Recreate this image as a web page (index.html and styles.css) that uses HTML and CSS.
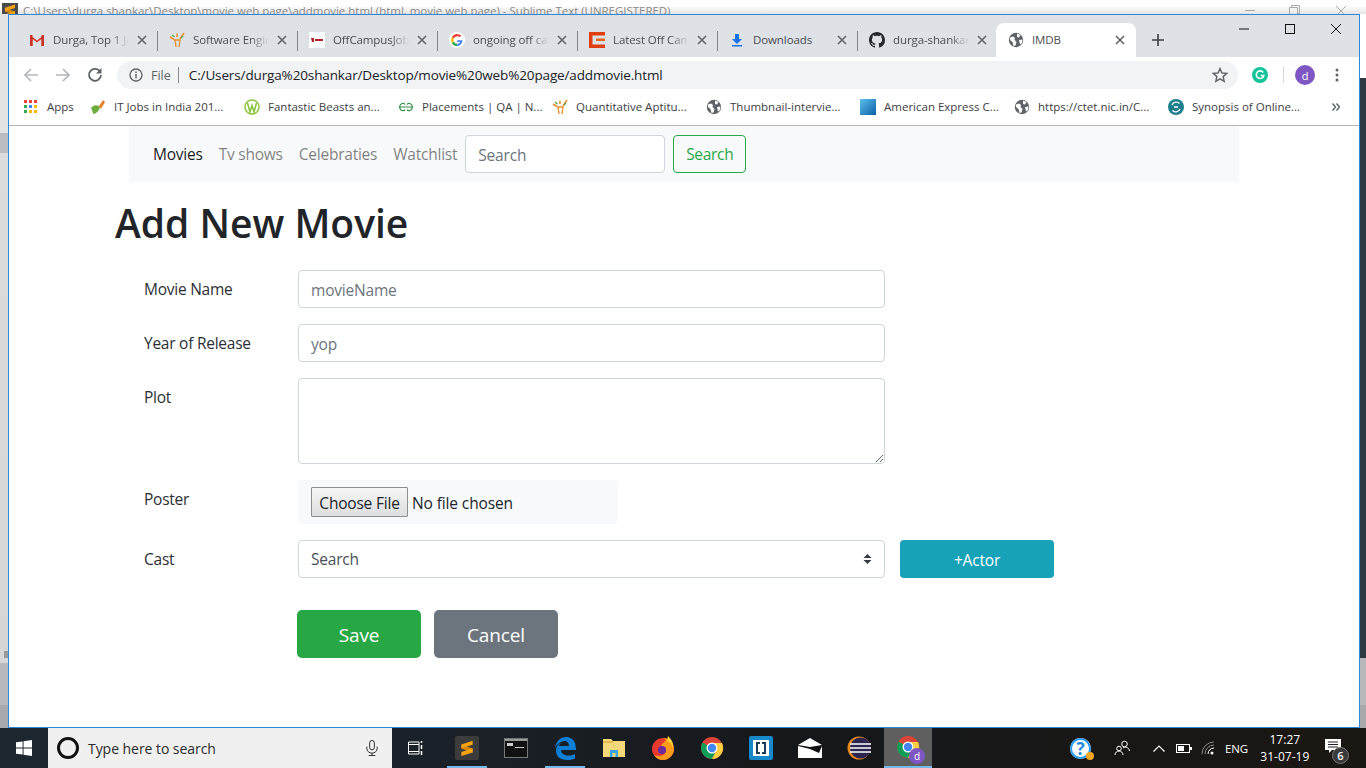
FILE: index.html
```html
<!DOCTYPE html>
<html lang="en">
<head>
<meta charset="utf-8">
<title>IMDB</title>
<link rel="stylesheet" href="styles.css">
</head>
<body>
<svg class="defs" width="0" height="0">
  <defs>
    <symbol id="globe" viewBox="0 0 16 16"><circle cx="8" cy="8" r="7.2" fill="#5f6368"/><path d="M2 5.5 5 4.5 7 6 6.5 8 8.500 10 7.500 13.500 5.500 14 4.500 10 2 8ZM9 1.500 12.500 3 11 5.500 9 5ZM11 8 14.500 7.500 14 11 12 12.500Z" fill="#fff"/></symbol>
    <symbol id="fig" viewBox="0 0 16 16"><path d="M1 5 5 7.500M15 1 11 7M8 1.500V5" stroke="#e8912d" stroke-width="1.600" fill="none"/><path d="M5 8H11L10 15M6 8 7 15" stroke="#e8912d" stroke-width="1.400" fill="none"/><path d="M3 3 5.500 5M12 6 14 4" stroke="#5aa848" stroke-width="1.400" fill="none"/></symbol>
    <symbol id="close" viewBox="0 0 10 10"><path d="M1 1 9 9M9 1 1 9" stroke="#5f6368" stroke-width="1.600"/></symbol>
    <symbol id="sublime" viewBox="0 0 16 16"><path d="M3 5 13 8.500V12L3 8.500Z" fill="#d98a0a"/><path d="M3 4.800 13 1.500V5L3 8.300Z" fill="#f7a30f"/><path d="M3 11.500 13 8.200V12L3 15Z" fill="#f7a30f"/></symbol>
  </defs>
</svg>
<div class="desktop">
  <div class="behind">
    <span class="sublime-small"><svg class="sublime-glyph"><use href="#sublime"/></svg></span>
    <span class="behind-title">C:\Users\durga shankar\Desktop\movie web page\addmovie.html (html, movie web page) - Sublime Text (UNREGISTERED)</span>
    <div class="behind-controls">
      <span class="bc-min"></span>
      <svg class="bc-max" viewBox="0 0 11 11"><path d="M.5 2.500H8.500V10.500H.5ZM2.500 2.500V.5H10.500V8.500H8.500" fill="none" stroke="#aaa"/></svg>
      <svg class="bc-x" viewBox="0 0 10 10"><path d="M0 0 10 10M10 0 0 10" stroke="#aaa"/></svg>
    </div>
  </div>
  <div class="middle">
    <div class="side side-left"><span class="side-blob"></span></div>
    <div class="window">
      <div class="tabstrip">
        <div class="tab">
          <svg class="favicon" viewBox="0 0 16 16"><path d="M1 14V3L8 8.500 15 3V14H12.500V7L8 10.500 3.500 7V14Z" fill="#d93a2f"/><path d="M1 3 3.500 3V14H1ZM12.500 3H15V14H12.500Z" fill="#c5352b"/></svg>
          <span class="tab-title">Durga, Top 1 Jobs for you</span>
          <svg class="tab-close"><use href="#close"/></svg>
        </div>
        <div class="tab">
          <svg class="favicon"><use href="#fig"/></svg>
          <span class="tab-title">Software Engineer</span>
          <svg class="tab-close"><use href="#close"/></svg>
        </div>
        <div class="tab">
          <svg class="favicon" viewBox="0 0 16 16"><rect width="16" height="16" fill="#fff"/><path d="M2 6H5V10H3ZM6 7H14V9H6Z" fill="#b3232a"/></svg>
          <span class="tab-title">OffCampusJobs4u</span>
          <svg class="tab-close"><use href="#close"/></svg>
        </div>
        <div class="tab">
          <svg class="favicon" viewBox="0 0 16 16"><circle cx="8" cy="8" r="8" fill="#fff"/><path d="M13.600 8.200H8.200V10H11.400A3.500 3.500 0 0 1 8.200 11.800V14.200A6 6 0 0 0 13.600 8.200Z" fill="#4285f4"/><path d="M8.200 11.800A3.800 3.800 0 0 1 4.700 9.500L2.800 11A6.200 6.200 0 0 0 8.200 14.200Z" fill="#34a853"/><path d="M4.700 9.500A3.800 3.800 0 0 1 4.700 6.500L2.800 5A6.200 6.200 0 0 0 2.800 11Z" fill="#fbbc05"/><path d="M4.700 6.500A3.800 3.800 0 0 1 10.600 5.300L12.300 3.600A6.200 6.200 0 0 0 2.800 5Z" fill="#ea4335"/></svg>
          <span class="tab-title">ongoing off campus</span>
          <svg class="tab-close"><use href="#close"/></svg>
        </div>
        <div class="tab">
          <svg class="favicon" viewBox="0 0 16 16"><path d="M0 0H16V3.500H3.500V12.500H16V16H0Z" fill="#e0400f"/><path d="M7 6.500H16V9H7Z" fill="#e8621a"/></svg>
          <span class="tab-title">Latest Off Campus</span>
          <svg class="tab-close"><use href="#close"/></svg>
        </div>
        <div class="tab">
          <svg class="favicon" viewBox="0 0 16 16"><path d="M6 2H10V7H13L8 12 3 7H6ZM3 13H13V14.500H3Z" fill="#1a73e8"/></svg>
          <span class="tab-title tab-title-full">Downloads</span>
          <svg class="tab-close"><use href="#close"/></svg>
        </div>
        <div class="tab">
          <svg class="favicon" viewBox="0 0 16 16"><path fill="#24292e" d="M8 0C3.580 0 0 3.580 0 8c0 3.540 2.290 6.530 5.470 7.590.4.070.55-.17.55-.38 0-.19-.01-.82-.01-1.490-2.010.37-2.530-.49-2.690-.94-.09-.23-.48-.94-.82-1.130-.28-.15-.68-.52-.01-.53.63-.01 1.080.58 1.230.82.72 1.210 1.870.87 2.330.66.070-.52.280-.87.510-1.070-1.780-.2-3.640-.89-3.640-3.950 0-.87.310-1.590.820-2.150-.08-.2-.36-1.020.08-2.120 0 0 .67-.21 2.200.82.640-.18 1.320-.27 2-.27s1.360.09 2 .27c1.530-1.040 2.200-.82 2.200-.82.440 1.100.160 1.920.080 2.120.51.560.820 1.270.820 2.150 0 3.070-1.870 3.750-3.650 3.950.290.250.540.730.540 1.480 0 1.070-.01 1.930-.01 2.200 0 .21.150.46.550.38A8.010 8.010 0 0 0 16 8c0-4.420-3.580-8-8-8z"/></svg>
          <span class="tab-title">durga-shankar/movie</span>
          <svg class="tab-close"><use href="#close"/></svg>
        </div>
        <div class="tab tab-active">
          <svg class="favicon"><use href="#globe"/></svg>
          <span class="tab-title tab-title-full">IMDB</span>
          <svg class="tab-close"><use href="#close"/></svg>
        </div>
        <svg class="newtab" viewBox="0 0 12 12"><path d="M6 0V12M0 6H12" stroke="#3c4043" stroke-width="1.600"/></svg>
        <div class="win-controls">
          <svg class="win-btn" viewBox="0 0 46 12"><path d="M18 6H28" stroke="#111"/></svg>
          <svg class="win-btn" viewBox="0 0 46 12"><rect x="18.500" y="1.500" width="9" height="9" fill="none" stroke="#111"/></svg>
          <svg class="win-btn" viewBox="0 0 46 12"><path d="M18 1 28 11M28 1 18 11" stroke="#111"/></svg>
        </div>
      </div>
      <div class="toolbar">
        <svg class="nav-arrow" viewBox="0 0 16 16"><path d="M15 8H2M8 2 2 8 8 14" fill="none" stroke="#b4b7bb" stroke-width="1.700"/></svg>
        <svg class="nav-arrow" viewBox="0 0 16 16"><path d="M1 8H14M8 2 14 8 8 14" fill="none" stroke="#b4b7bb" stroke-width="1.700"/></svg>
        <svg class="nav-arrow" viewBox="0 0 16 16"><path d="M13.300 5A6 6 0 1 0 14 8" fill="none" stroke="#5f6368" stroke-width="1.800"/><path d="M14.500 1V6.500H9Z" fill="#5f6368"/></svg>
        <div class="omnibox">
          <svg class="omni-info" viewBox="0 0 14 14"><circle cx="7" cy="7" r="6" fill="none" stroke="#5f6368" stroke-width="1.300"/><path d="M7 6V10.500M7 3.500V5" stroke="#5f6368" stroke-width="1.400"/></svg>
          <span class="omni-file">File</span>
          <span class="omni-sep"></span>
          <span class="omni-url">C:/Users/durga%20shankar/Desktop/movie%20web%20page/addmovie.html</span>
          <svg class="omni-star" viewBox="0 0 16 16"><path d="M8 1.500 9.900 6 14.800 6.400 11.100 9.600 12.200 14.400 8 11.900 3.800 14.400 4.900 9.600 1.200 6.400 6.100 6Z" fill="none" stroke="#5f6368" stroke-width="1.400"/></svg>
        </div>
        <svg class="ext-g" viewBox="0 0 16 16"><circle cx="8" cy="8" r="8" fill="#15c39a"/><path d="M11.200 5.500A3.800 3.800 0 1 0 11.800 8.500H8.800" fill="none" stroke="#fff" stroke-width="1.600"/></svg>
        <span class="tool-sep"></span>
        <span class="avatar">d</span>
        <svg class="dots" viewBox="0 0 4 14"><circle cx="2" cy="2" r="1.500" fill="#5f6368"/><circle cx="2" cy="7" r="1.500" fill="#5f6368"/><circle cx="2" cy="12" r="1.500" fill="#5f6368"/></svg>
      </div>
      <div class="bookmarks">
        <div class="apps">
          <svg class="apps-icon" viewBox="0 0 13 13">
            <rect width="3" height="3" fill="#ea4335"/><rect x="5" width="3" height="3" fill="#ea4335"/><rect x="10" width="3" height="3" fill="#ea4335"/>
            <rect y="5" width="3" height="3" fill="#34a853"/><rect x="5" y="5" width="3" height="3" fill="#4285f4"/><rect x="10" y="5" width="3" height="3" fill="#fbbc05"/>
            <rect y="10" width="3" height="3" fill="#34a853"/><rect x="5" y="10" width="3" height="3" fill="#fbbc05"/><rect x="10" y="10" width="3" height="3" fill="#fbbc05"/>
          </svg>
          <span>Apps</span>
        </div>
        <div class="bm"><svg class="favicon" viewBox="0 0 16 16"><path d="M1 9C4 5 8 6 10 8 9 12 6 15 3 15 3 13 2 11 1 9Z" fill="#6cae3c"/><path d="M9 7 13 1 15 3 11 10Z" fill="#e8812d"/></svg><span>IT Jobs in India 201...</span></div>
        <div class="bm"><svg class="favicon" viewBox="0 0 16 16"><circle cx="8" cy="8" r="7" fill="none" stroke="#8cc63f" stroke-width="1.500"/><path d="M3.500 4 6 13 8 6.500 10 13 12.500 4" fill="none" stroke="#8cc63f" stroke-width="1.600"/></svg><span>Fantastic Beasts an...</span></div>
        <div class="bm"><svg class="favicon" viewBox="0 0 16 16"><path d="M8 8H1.500C2 4 6 3.500 7 5.500M1.500 8C2 12 6 12.500 7 10.500M8 8H14.500C14 4 10 3.500 9 5.500M14.500 8C14 12 10 12.500 9 10.500" fill="none" stroke="#2f8d46" stroke-width="1.200"/></svg><span>Placements | QA | N...</span></div>
        <div class="bm"><svg class="favicon"><use href="#fig"/></svg><span>Quantitative Aptitu...</span></div>
        <div class="bm"><svg class="favicon"><use href="#globe"/></svg><span>Thumbnail-intervie...</span></div>
        <div class="bm"><svg class="favicon" viewBox="0 0 16 16"><defs><linearGradient id="amex" x1="0" y1="0" x2="1" y2="1"><stop offset="0" stop-color="#5cc0ea"/><stop offset="1" stop-color="#0a5ea8"/></linearGradient></defs><rect width="16" height="16" fill="url(#amex)"/></svg><span>American Express C...</span></div>
        <div class="bm"><svg class="favicon"><use href="#globe"/></svg><span>https://ctet.nic.in/C...</span></div>
        <div class="bm"><svg class="favicon" viewBox="0 0 16 16"><circle cx="8" cy="8" r="8" fill="#1d7f8c"/><path d="M4 6A4.500 4.500 0 0 1 11.500 4.500M12 10A4.500 4.500 0 0 1 4.500 11.500M6 8H10" fill="none" stroke="#fff" stroke-width="1.300"/></svg><span>Synopsis of Online...</span></div>
        <svg class="more" viewBox="0 0 8 8"><path d="M.5 .5 3.500 4 .5 7.500M4.500 .5 7.500 4 4.500 7.500" fill="none" stroke="#5f6368" stroke-width="1.400"/></svg>
      </div>
      <div class="page">
        <div class="container">
          <nav class="navbar">
            <a class="nav-link nav-link-active">Movies</a>
            <a class="nav-link">Tv shows</a>
            <a class="nav-link">Celebraties</a>
            <a class="nav-link">Watchlist</a>
            <input class="field nav-search" type="text" placeholder="Search">
            <button class="btn-outline" type="button">Search</button>
          </nav>
          <h1 class="heading">Add New Movie</h1>
          <form class="form">
            <label class="label">Movie Name</label>
            <input class="field" type="text" placeholder="movieName">
            <label class="label">Year of Release</label>
            <input class="field" type="text" placeholder="yop">
            <label class="label">Plot</label>
            <textarea class="field plot"></textarea>
            <label class="label label-poster">Poster</label>
            <div class="file-box"><input class="file" type="file"></div>
            <label class="label label-cast">Cast</label>
            <div class="cast-row">
              <select class="field cast"><option>Search</option></select>
              <button class="btn-actor" type="button">+Actor</button>
            </div>
            <div class="actions">
              <button class="btn-lg btn-save" type="button">Save</button>
              <button class="btn-lg btn-cancel" type="button">Cancel</button>
            </div>
          </form>
        </div>
      </div>
    </div>
    <div class="side side-right"></div>
  </div>
  <div class="taskbar">
    <div class="start"><svg class="win-logo" viewBox="0 0 17 17"><path d="M0 2.500 7 1.500V8H0ZM8 1.300 17 0V8H8ZM0 9H7V15.500L0 14.500ZM8 9H17V17L8 15.700Z" fill="#fff"/></svg></div>
    <div class="searchbox">
      <span class="cortana"></span>
      <span class="search-text">Type here to search</span>
      <svg class="mic" viewBox="0 0 12 17"><rect x="3.500" y=".5" width="5" height="10" rx="2.500" fill="none" stroke="#222"/><path d="M.5 7V9A5.500 5 0 0 0 11.500 9V7M6 14V16.500M2.500 16.500H9.500" fill="none" stroke="#222"/></svg>
    </div>
    <div class="task task-view"><svg class="tv-icon" viewBox="0 0 16 16"><path d="M.5 2H11V14H.5ZM.5 4.500H11M.5 11.500H11" fill="none" stroke="#fff"/><path d="M13.500 1V3M13.500 5V9M13.500 11V15" stroke="#fff" stroke-width="1.500"/></svg></div>
    <div class="task task-open"><span class="sublime-tile"><svg class="t-icon-sm"><use href="#sublime"/></svg></span></div>
    <div class="task"><svg class="t-icon" viewBox="0 0 24 20"><rect x=".5" y=".5" width="23" height="19" fill="#111" stroke="#777"/><rect x="1" y="1" width="22" height="2" fill="#999"/><path d="M3 5H9V8H3ZM11 9H20V10H11Z" fill="#ccc"/></svg></div>
    <div class="task task-open"><svg class="t-icon" viewBox="0 0 24 24"><path d="M2 12C3 4 9 1 13 1 20 1 23 6 23 14H8C8 18 12 19.500 15 19.500 18 19.500 20 19 22 18V22.500C19 23.500 17 24 14 24 7 24 3 20 3 15 3 11 5 8 8 7 6 9 6 10 6 10H16C16 7 14 5 12 5 8 5 4 8 2 12Z" fill="#0f7fd6"/></svg></div>
    <div class="task"><svg class="t-icon" viewBox="0 0 24 20"><path d="M1 1H9L11 3H23V19H1Z" fill="#f5d87a"/><path d="M1 3H11V5H1Z" fill="#e3b94d"/><path d="M8 12H16V19H13.500V15H10.500V19H8Z" fill="#38a5e4"/></svg></div>
    <div class="task"><svg class="t-icon" viewBox="0 0 24 24"><circle cx="12" cy="13" r="11" fill="#e8392f"/><path d="M12 2C20 2 23 9 23 13 23 19 18 24 12 24 8 24 5 22 3 19 8 21 14 20 15 15 16 11 12 10 10 10 11 7 14 6 15 4 14 3 13 2.500 12 2Z" fill="#fb9a1b"/><path d="M17 0C20 3 23 7 22 12 21 8 19 6 16 5Z" fill="#ffd43a"/><circle cx="11" cy="14" r="4" fill="#6a2b9e"/></svg></div>
    <div class="task"><svg class="t-icon" viewBox="0 0 24 24"><circle cx="12" cy="12" r="11" fill="#db4437"/><path d="M12 12 2.500 6.500A11 11 0 0 0 12 23L17 13Z" fill="#0f9d58"/><path d="M12 7H22A11 11 0 0 1 12 23L17 13Z" fill="#ffcd40"/><circle cx="12" cy="12" r="5.500" fill="#fff"/><circle cx="12" cy="12" r="4.200" fill="#4285f4"/></svg></div>
    <div class="task"><svg class="t-icon" viewBox="0 0 24 24"><rect width="24" height="24" rx="2" fill="#1788c9"/><rect x="4" y="4" width="16" height="16" fill="#fff"/><path d="M11 7H8V17H11M13 7H16V17H13" fill="none" stroke="#1c3d5a" stroke-width="2"/></svg></div>
    <div class="task"><svg class="t-icon" viewBox="0 0 24 20"><path d="M0 7 12 0 24 7V20H0Z" fill="#fff"/><path d="M0 7 12 9 24 7 24 8 21 15 12 11 0 8Z" fill="#111"/></svg></div>
    <div class="task"><svg class="t-icon" viewBox="0 0 24 24"><circle cx="12" cy="12" r="11.500" fill="#e8891c"/><circle cx="13.500" cy="12" r="10.500" fill="#2a2550"/><path d="M3 8H24M3 12H24M3 16H24" stroke="#fff" stroke-width="1.400"/></svg></div>
    <div class="task task-active">
      <span class="chrome-wrap">
        <svg class="t-icon" viewBox="0 0 24 24"><circle cx="12" cy="12" r="11" fill="#db4437"/><path d="M12 12 2.500 6.500A11 11 0 0 0 12 23L17 13Z" fill="#0f9d58"/><path d="M12 7H22A11 11 0 0 1 12 23L17 13Z" fill="#ffcd40"/><circle cx="12" cy="12" r="5.500" fill="#fff"/><circle cx="12" cy="12" r="4.200" fill="#4285f4"/></svg>
        <span class="chrome-badge">d</span>
      </span>
    </div>
    <div class="tray">
      <span class="help-wrap"><span class="help">?</span><span class="help-dot"></span></span>
      <svg class="people" viewBox="0 0 16 16"><circle cx="10.500" cy="4" r="2.800" fill="none" stroke="#fff"/><circle cx="5" cy="8.500" r="2.300" fill="none" stroke="#fff"/><path d="M1 15C1 12.500 3 11 5 11S9 12.500 9 15M9 8C11 6.500 15 7 15.500 11" fill="none" stroke="#fff"/></svg>
      <svg class="caret" viewBox="0 0 12 7"><path d="M.5 6.500 6 1 11.500 6.500" fill="none" stroke="#fff" stroke-width="1.200"/></svg>
      <svg class="battery" viewBox="0 0 16 9"><rect x=".5" y=".5" width="13" height="8" fill="none" stroke="#fff"/><rect x="2" y="2" width="6" height="5" fill="#fff"/><rect x="14" y="3" width="2" height="3" fill="#fff"/></svg>
      <svg class="wifi" viewBox="0 0 14 14"><path d="M1 13A12 12 0 0 1 13 1M4 13A9 9 0 0 1 13 4" fill="none" stroke="#8a8a8a"/><path d="M7 13A6 6 0 0 1 13 7" fill="none" stroke="#fff"/><circle cx="11" cy="12" r="1.500" fill="#fff"/></svg>
      <span class="lang">ENG</span>
      <div class="clock"><span>17:27</span><span>31-07-19</span></div>
      <span class="notif">
        <svg class="notif-icon" viewBox="0 0 16 14"><path d="M0 0H16V11H7L4 14V11H0Z" fill="#fff"/><path d="M3 3H13M3 5.500H13M3 8H13" stroke="#222"/></svg>
        <span class="notif-count">6</span>
      </span>
    </div>
  </div>
</div>
</body>
</html>
```
FILE: styles.css
```css
* { box-sizing: border-box; }
html, body { margin: 0; padding: 0; }
body { font-family: "Open Sans", "Noto Sans", "Liberation Sans", sans-serif; background: #fff; overflow: hidden; }
.defs { display: block; height: 0; }
svg { display: block; flex: none; }

.desktop { width: 1366px; height: 768px; display: flex; flex-direction: column; overflow: hidden; }

.behind { height: 14px; flex: none; display: flex; align-items: flex-start; background: linear-gradient(#fff 40%, #e4e4e4); padding-left: 2px; }
.sublime-small { width: 16px; height: 16px; margin-top: 3px; background: #4a4a4a; flex: none; }
.sublime-glyph { width: 16px; height: 16px; }
.behind-title { font-size: 11.450px; color: #8a8a8a; margin: 3px 0 0 5px; white-space: nowrap; }
.behind-controls { margin-left: auto; display: flex; align-items: center; padding: 5px 20px 0 0; }
.bc-min { width: 10px; height: 1px; background: #aaa; }
.bc-max { width: 11px; height: 11px; margin-left: 34px; }
.bc-x { width: 10px; height: 10px; margin-left: 36px; }

.middle { flex: 1; display: flex; min-height: 0; }
.side { flex: none; }
.side-left { width: 8px; background: linear-gradient(#e3e3e3 0, #e3e3e3 119px, #b9bcc0 119px, #b9bcc0 139px, #dcdcdc 139px, #d6d6d6 649px, #b6b9bd 649px, #b6b9bd 691px, #a6a9ae 691px); display: flex; flex-direction: column; justify-content: flex-end; }
.side-blob { display: block; width: 4px; height: 7px; background: #9a9a9a; margin: 0 0 70px 4px; }
.side-right { width: 6px; background: linear-gradient(#fff 0, #fff 64px, #2d3a44 64px, #2d3a44 644px, #b8b8bc 644px, #b8b8bc 691px, #a8a8ad 691px); }

.window { width: 1352px; flex: none; border: 1px solid #2b88d8; background: #fff; display: flex; flex-direction: column; position: relative; z-index: 1; }

.tabstrip { height: 42px; flex: none; background: #dee1e6; display: flex; align-items: flex-end; padding-left: 9px; }
.tab { width: 140px; height: 34px; display: flex; align-items: center; padding: 0 11px; position: relative; flex: none; }
.tab::after { content: ""; position: absolute; right: 0; top: 8px; width: 1px; height: 20px; background: #80868b; }
.tab-active { background: #fff; border-radius: 8px 8px 0 0; margin-left: -2px; padding-left: 12px; }
.tab-active::after { display: none; }
.favicon { width: 16px; height: 16px; }
.tab-title { flex: 1; min-width: 0; margin-left: 8px; padding-bottom: 2px; font-size: 11.500px; color: #4a4d51; white-space: nowrap; overflow: hidden; letter-spacing: -.1px; -webkit-mask-image: linear-gradient(90deg, #000 75%, transparent 100%); mask-image: linear-gradient(90deg, #000 75%, transparent 100%); }
.tab-title-full { -webkit-mask-image: none; mask-image: none; }
.tab-close { width: 10px; height: 10px; margin-left: 8px; }
.newtab { width: 12px; height: 12px; margin: 0 0 11px 16px; }
.win-controls { margin-left: auto; display: flex; align-self: flex-start; padding-top: 8px; }
.win-btn { width: 46px; height: 12px; }

.toolbar { height: 33px; flex: none; background: #fff; display: flex; align-items: center; padding: 3px 14px 0 14px; }
.nav-arrow { width: 16px; height: 16px; margin-right: 16px; }
.omnibox { width: 1121px; height: 28px; margin-left: -2px; border-radius: 14px; background: #f1f3f4; display: flex; align-items: center; padding: 0 10px 0 12px; flex: none; }
.omni-info { width: 14px; height: 14px; }
.omni-file { font-size: 12.500px; color: #5f6368; margin-left: 8px; }
.omni-sep { width: 1px; height: 16px; background: #8a8d91; margin: 0 10px 0 7px; }
.omni-url { font-size: 13.500px; color: #202124; letter-spacing: -.13px; white-space: nowrap; }
.omni-star { width: 16px; height: 16px; margin-left: auto; }
.ext-g { width: 16px; height: 16px; margin-left: 14px; }
.tool-sep { width: 1px; height: 16px; background: #d5d7da; margin-left: 15px; flex: none; }
.avatar { width: 20px; height: 20px; border-radius: 50%; background: #7e57c2; color: #fff; font-size: 11px; display: flex; align-items: center; justify-content: center; margin-left: 11px; flex: none; }
.dots { width: 4px; height: 14px; margin-left: 20px; }

.bookmarks { height: 36px; flex: none; background: #fff; border-bottom: 1px solid #b5b5b5; display: flex; align-items: center; padding: 0 0 2px 15px; font-size: 11.500px; color: #3c4043; }
.apps { width: 66px; display: flex; align-items: center; flex: none; }
.apps-icon { width: 13px; height: 13px; margin-right: 10px; }
.bm { width: 154px; flex: none; display: flex; align-items: center; gap: 8px; white-space: nowrap; }
.more { width: 8px; height: 8px; margin-left: 10px; }

.page { flex: 1; min-height: 0; background: #fff; }
.container { width: 1110px; margin: 0 auto; color: #212529; }
.navbar { height: 56px; background: #f8f9fa; display: flex; align-items: center; padding: 0 16px; font-size: 15.500px; }
.nav-link { padding: 0 8px; color: rgba(0,0,0,.5); letter-spacing: -.23px; white-space: nowrap; }
.nav-link-active { color: rgba(0,0,0,.9); }
.nav-search { width: 200px; height: 38px; flex: none; }
.btn-outline { height: 38px; width: 73px; margin-left: 8px; background: transparent; color: #28a745; border: 1px solid #28a745; border-radius: 4px; font: inherit; letter-spacing: -.3px; padding: 0; }

.heading { font-size: 39px; font-weight: 600; line-height: 44px; margin: 19px 0 25px -14px; color: #212529; }

.form { display: grid; grid-template-columns: 154px 1fr; row-gap: 16px; padding-left: 15px; font-size: 15.500px; }
.label { padding-top: 7px; line-height: 24px; height: 38px; letter-spacing: -.25px; color: #2c3035; }
.field { display: block; width: 587px; height: 38px; border: 1px solid #ced4da; border-radius: 4px; background: #fff; padding: 7px 12px 5px; font: inherit; font-size: 15.500px; color: #495057; letter-spacing: -.2px; outline: none; }
.field::placeholder { color: #6c757d; opacity: 1; }
.nav-search { width: 200px; }
.plot { height: 86px; resize: vertical; }
.label-poster { padding-top: 7px; }
.file-box { width: 320px; height: 44px; background: #f8f9fa; border-radius: 4px; padding: 7px 13px; }
.file { font: inherit; font-size: 15.500px; color: #212529; letter-spacing: -.12px; width: 300px; height: 30px; }
.file::file-selector-button { height: 30px; width: 97px; font: inherit; letter-spacing: -.2px; padding: 1px 0 0; margin-right: 4px; border: 1px solid #8f8f8f; border-radius: 1px; background: linear-gradient(#f6f6f6, #dedede); color: #212529; }
.label-cast { padding-top: 7px; }
.cast-row { display: flex; gap: 15px; }
.cast { appearance: none; -webkit-appearance: none; flex: none; padding: 6px 12px; background: #fff url("data:image/svg+xml,%3Csvg xmlns='http://www.w3.org/2000/svg' width='9' height='12'%3E%3Cpath d='M.5 5 4.500 1 8.500 5ZM.5 7 4.500 11 8.500 7Z' fill='%23343a40'/%3E%3C/svg%3E") no-repeat right 12px center; }
.btn-actor { width: 154px; height: 38px; background: #17a2b8; color: #fff; border: 0; border-radius: 4px; font: inherit; letter-spacing: -.2px; padding: 1px 0 0; }
.actions { grid-column: 2; display: flex; gap: 13px; margin: 16px 0 0 -1px; }
.btn-lg { width: 124px; height: 48px; border: 0; border-radius: 5px; color: #fff; font: inherit; font-size: 19px; padding: 2px 0 0; letter-spacing: -.1px; }
.btn-save { background: #28a745; }
.btn-cancel { background: #6c757d; }

.taskbar { height: 40px; flex: none; display: flex; align-items: center; background: linear-gradient(90deg, #1c2730 0, #1a2026 35%, #15171a 60%, #1b1712 100%); }
.start { width: 48px; height: 40px; display: flex; align-items: center; justify-content: center; flex: none; }
.win-logo { width: 16px; height: 16px; }
.searchbox { width: 344px; height: 40px; background: #f0f0f0; display: flex; align-items: center; padding: 0 14px 0 9px; flex: none; }
.cortana { width: 22px; height: 22px; border-radius: 50%; border: 3px solid #111; flex: none; }
.search-text { font-size: 14px; color: #2b2b2b; margin-left: 9px; letter-spacing: -.05px; }
.mic { width: 12px; height: 16px; margin-left: auto; }
.task { width: 49px; height: 40px; display: flex; align-items: center; justify-content: center; flex: none; position: relative; }
.task-view { width: 48px; margin-right: 2px; }
.tv-icon { width: 16px; height: 16px; }
.task-open::after { content: ""; position: absolute; left: 5px; right: 4px; bottom: 0; height: 2px; background: #76b9ed; }
.sublime-tile { width: 24px; height: 24px; background: #3c3c3c; border-radius: 2px; display: flex; align-items: center; justify-content: center; }
.t-icon { width: 24px; height: 24px; }
.t-icon-sm { width: 18px; height: 18px; }
.task-active { background: #5f5f5f; border-bottom: 2px solid #76b9ed; width: 48px; margin-left: 1px; }
.chrome-wrap { position: relative; display: block; }
.chrome-badge { position: absolute; right: -5px; bottom: -5px; width: 16px; height: 16px; border-radius: 50%; background: #7e57c2; color: #fff; font-size: 10px; line-height: 16px; text-align: center; }

.tray { flex: 1; display: flex; align-items: center; height: 40px; padding-left: 138px; color: #fff; }
.help-wrap { position: relative; display: block; width: 21px; height: 21px; flex: none; }
.help { display: block; width: 21px; height: 21px; border-radius: 50%; background: #fff; box-shadow: inset 0 0 0 2px #2d9bf0; color: #1b87e0; font-size: 17px; font-weight: 700; line-height: 21px; text-align: center; }
.help-dot { position: absolute; right: -3px; bottom: -1px; width: 8px; height: 8px; border-radius: 50%; background: #f5a623; }
.people { width: 16px; height: 16px; margin-left: 23px; }
.caret { width: 12px; height: 7px; margin-left: 23px; }
.battery { width: 16px; height: 9px; margin-left: 11px; }
.wifi { width: 14px; height: 14px; margin-left: 9px; }
.lang { font-size: 11.500px; margin-left: 10px; letter-spacing: -.2px; }
.clock { display: flex; flex-direction: column; align-items: center; width: 58px; margin: -1px 0 0 8px; font-size: 12px; line-height: 17px; }
.notif { position: relative; display: block; width: 16px; height: 14px; margin: -4px 0 0 11px; }
.notif-icon { width: 16px; height: 14px; }
.notif-count { position: absolute; left: 7px; top: 8px; width: 17px; height: 17px; border-radius: 50%; background: #3a3a3a; border: 1px solid #777; font-size: 11px; font-weight: 600; line-height: 15px; text-align: center; }
```
